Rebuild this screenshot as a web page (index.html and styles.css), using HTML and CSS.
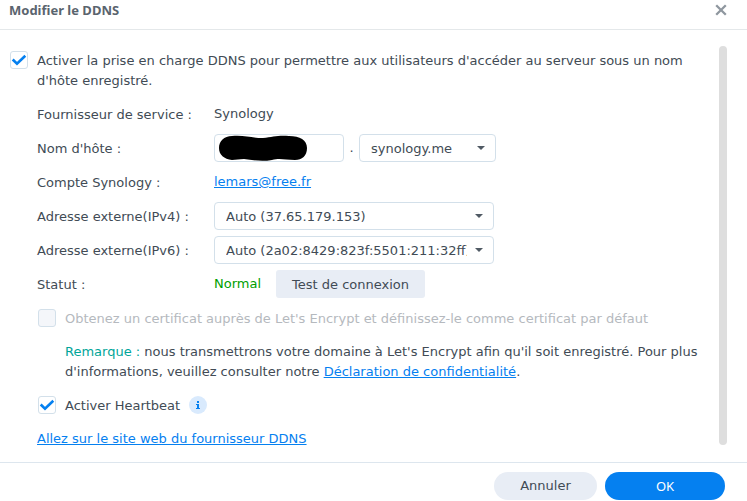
FILE: index.html
```html
<!DOCTYPE html>
<html lang="fr">
<head>
<meta charset="utf-8">
<title>Modifier le DDNS</title>
<link rel="stylesheet" href="styles.css">
</head>
<body>
<div class="dialog" role="dialog" aria-labelledby="dialog-title">
  <header class="dialog-header">
    <h1 class="dialog-title" id="dialog-title">Modifier le DDNS</h1>
    <button class="close" type="button" aria-label="Fermer">
      <svg width="12" height="12" viewBox="0 0 12 12" aria-hidden="true"><path d="M1.2 1.2L10.8 10.8M10.8 1.2L1.2 10.8"/></svg>
    </button>
  </header>
  <main class="dialog-body">
    <form class="form" id="ddns-form">
      <div class="check-row intro">
        <input class="checkbox" type="checkbox" id="enable" checked>
        <label class="text" for="enable">Activer la prise en charge DDNS pour permettre aux utilisateurs d'accéder au serveur sous un nom d'hôte enregistré.</label>
      </div>
      <div class="fields">
        <div class="row">
          <span class="row-label text">Fournisseur de service :</span>
          <span>Synology</span>
        </div>
        <div class="row">
          <label class="row-label text" for="host">Nom d'hôte :</label>
          <div class="host">
            <span class="host-name">
              <input class="textbox" type="text" id="host">
              <svg class="mask" width="88" height="26" viewBox="0 0 88 26" aria-hidden="true"><path d="M13 1C26 0 32 3 44 3C54 2 59 0 70 1C81 1 88 5 88 13C88 21 83 25 76 25C66 25 61 23 53 25C42 27 33 25 25 24C20 24 17 25 13 25C5 24 0 20 0 13C0 6 5 1 13 1Z"/></svg>
            </span>
            <span class="dot">.</span>
            <select class="select select-domain" aria-label="Domaine"><option>synology.me</option></select>
          </div>
        </div>
        <div class="row">
          <span class="row-label text">Compte Synology :</span>
          <span><a href="#">lemars@free.fr</a></span>
        </div>
        <div class="row">
          <label class="row-label text" for="ipv4">Adresse externe(IPv4) :</label>
          <select class="select" id="ipv4"><option>Auto (37.65.179.153)</option></select>
        </div>
        <div class="row">
          <label class="row-label text" for="ipv6">Adresse externe(IPv6) :</label>
          <select class="select" id="ipv6"><option>Auto (2a02:8429:823f:5501:211:32ff)</option></select>
        </div>
        <div class="row">
          <span class="row-label text">Statut :</span>
          <div class="status">
            <span class="normal">Normal</span>
            <button class="test" type="button">Test de connexion</button>
          </div>
        </div>
        <div class="check-row">
          <input class="checkbox" type="checkbox" id="certificate" disabled>
          <label class="text" for="certificate">Obtenez un certificat auprès de Let's Encrypt et définissez-le comme certificat par défaut</label>
        </div>
        <p class="note"><span class="note-title">Remarque :</span> nous transmettrons votre domaine à Let's Encrypt afin qu'il soit enregistré. Pour plus d'informations, veuillez consulter notre <a href="#">Déclaration de confidentialité</a>.</p>
        <div class="check-row">
          <input class="checkbox" type="checkbox" id="heartbeat" checked>
          <label class="text" for="heartbeat">Activer Heartbeat</label>
          <svg width="18" height="18" viewBox="0 0 18 18" role="img" aria-label="Information"><circle class="info-disc" cx="9" cy="9" r="9"/><path class="info-mark" d="M8 5h2v2H8zM7 8h3v4h1v1H7v-1h1V9H7z"/></svg>
        </div>
        <p class="provider"><a href="#">Allez sur le site web du fournisseur DDNS</a></p>
      </div>
    </form>
    <div class="scroll-thumb"></div>
  </main>
  <footer class="dialog-footer">
    <button class="pill" type="button">Annuler</button>
    <button class="pill primary" type="submit" form="ddns-form">OK</button>
  </footer>
</div>
</body>
</html>
```
FILE: styles.css
```css
* {
  box-sizing: border-box;
}

body,
button,
input,
select {
  font-family: Verdana, "DejaVu Sans", sans-serif;
  font-size: 13px;
  line-height: 20px;
  color: #414b55;
}

body {
  margin: 0;
  background: #fff;
}

.dialog {
  display: flex;
  flex-direction: column;
  min-height: 100vh;
}

.dialog-header {
  display: flex;
  align-items: center;
  justify-content: space-between;
  padding: 0 20px 9px 9px;
  border-bottom: 1px solid #e4e8ea;
}

.dialog-title {
  margin: 0;
  font-family: "Noto Sans", "Open Sans", sans-serif;
  font-size: 13px;
  font-weight: 700;
  line-height: 20px;
  color: #5a646e;
}

.close {
  display: flex;
  padding: 0;
  border: 0;
  background: none;
}

.close path {
  fill: none;
  stroke: #8f979f;
  stroke-width: 2.3;
}

.dialog-body {
  display: flex;
  flex: 1;
  justify-content: space-between;
  padding: 16px 20px 13px 10px;
}

.form {
  flex: 1;
  padding-top: 4px;
}

.text {
  padding-top: 2px;
}

.check-row {
  display: flex;
  align-items: center;
  gap: 9px;
  min-height: 28px;
}

.intro {
  align-items: flex-start;
  padding-right: 10px;
}

.intro .text {
  padding-top: 1px;
}

.intro .checkbox {
  margin-top: 1px;
}

.checkbox {
  flex: none;
  appearance: none;
  width: 18px;
  height: 18px;
  margin: 0;
  border: 1px solid #d3e0ea;
  border-radius: 3px;
  background: #fff;
}

.checkbox:checked {
  background: url("data:image/svg+xml,%3Csvg xmlns='http://www.w3.org/2000/svg' viewBox='0 0 16 16'%3E%3Cpath d='M1.7 7.5L6 11.7L14.3 3.7' fill='none' stroke='%230580f0' stroke-width='2.6'/%3E%3C/svg%3E") center / 16px no-repeat;
}

.checkbox:disabled {
  background: #f4f6fa;
}

.checkbox:disabled + label {
  color: #b5b9be;
}

.fields {
  display: flex;
  flex-direction: column;
  gap: 6px;
  padding: 9px 0 0 27px;
}

.fields .check-row {
  padding-left: 1px;
}

.row {
  display: grid;
  grid-template-columns: 177px 1fr;
  align-items: center;
  min-height: 28px;
}

.row-label {
  white-space: nowrap;
}

a {
  color: #0580f0;
}

.host,
.status {
  display: flex;
  align-items: center;
}

.status {
  gap: 15px;
}

.host-name {
  position: relative;
  display: flex;
}

.textbox,
.select {
  height: 28px;
  border: 1px solid #d3e0ea;
  border-radius: 4px;
  background: #fff;
}

.textbox {
  width: 130px;
  padding: 0 11px;
}

.mask {
  position: absolute;
  top: 1px;
  left: 5px;
}

.dot {
  width: 15px;
  text-align: center;
}

.select {
  appearance: none;
  width: 280px;
  padding: 2px 26px 0 11px;
  background: url("data:image/svg+xml,%3Csvg xmlns='http://www.w3.org/2000/svg' viewBox='0 0 8 4'%3E%3Cpath d='M0 0H8L4 4Z' fill='%23505a64'/%3E%3C/svg%3E") right 10px center / 8px 4px no-repeat #fff;
}

.select-domain {
  width: 137px;
}

.normal {
  color: #00a000;
}

.test {
  height: 28px;
  padding: 2px 16px 0;
  border: 0;
  border-radius: 3px;
  background: #e8edf5;
}

.note {
  margin: 4px 0 3px;
  padding-left: 28px;
}

.note-title {
  color: #00a599;
}

.info-disc {
  fill: #d9eafd;
}

.info-mark {
  fill: #0580f0;
}

.provider {
  margin: 4px 0 0;
}

.scroll-thumb {
  width: 8px;
  margin-bottom: 4px;
  border-radius: 4px;
  background: #dedede;
}

.dialog-footer {
  display: flex;
  justify-content: flex-end;
  gap: 8px;
  padding: 9px 22px 1px;
  border-top: 1px solid #dde6ee;
}

.pill {
  width: 103px;
  height: 28px;
  padding: 0;
  border: 0;
  border-radius: 14px;
  background: #e8edf5;
}

.pill.primary {
  width: 120px;
  background: #0580f0;
  font-family: "Noto Sans", "Open Sans", sans-serif;
  color: #fff;
}
```
